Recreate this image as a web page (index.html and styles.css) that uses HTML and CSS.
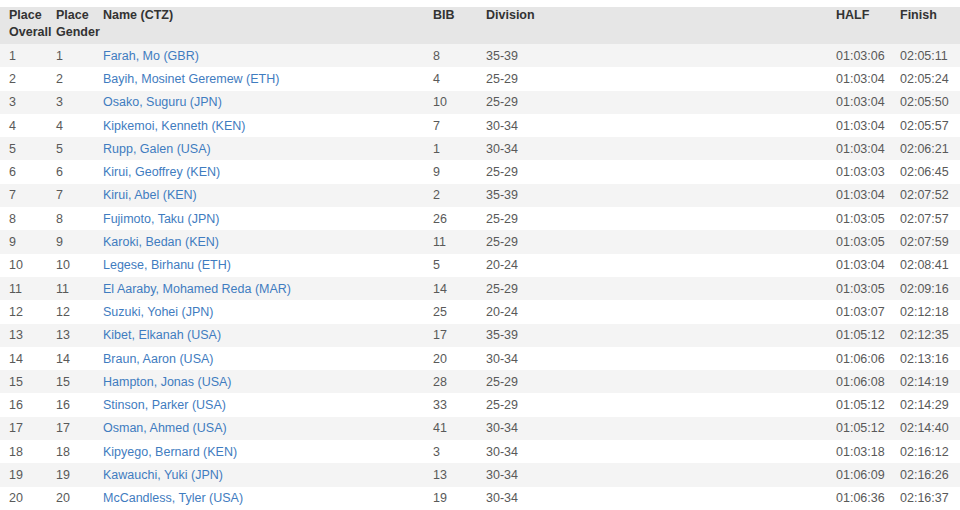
FILE: index.html
```html
<!DOCTYPE html>
<html>
<head>
<meta charset="utf-8">
<link rel="stylesheet" href="styles.css">
</head>
<body>
<table class="results">
  <colgroup>
    <col class="c-overall"><col class="c-gender"><col class="c-name"><col class="c-bib"><col class="c-div"><col class="c-half"><col class="c-finish">
  </colgroup>
  <thead>
    <tr><th>Place Overall</th><th>Place Gender</th><th>Name (CTZ)</th><th>BIB</th><th>Division</th><th>HALF</th><th>Finish</th></tr>
  </thead>
  <tbody>
    <tr><td>1</td><td>1</td><td><a href="#">Farah, Mo (GBR)</a></td><td>8</td><td>35-39</td><td>01:03:06</td><td>02:05:11</td></tr>
    <tr><td>2</td><td>2</td><td><a href="#">Bayih, Mosinet Geremew (ETH)</a></td><td>4</td><td>25-29</td><td>01:03:04</td><td>02:05:24</td></tr>
    <tr><td>3</td><td>3</td><td><a href="#">Osako, Suguru (JPN)</a></td><td>10</td><td>25-29</td><td>01:03:04</td><td>02:05:50</td></tr>
    <tr><td>4</td><td>4</td><td><a href="#">Kipkemoi, Kenneth (KEN)</a></td><td>7</td><td>30-34</td><td>01:03:04</td><td>02:05:57</td></tr>
    <tr><td>5</td><td>5</td><td><a href="#">Rupp, Galen (USA)</a></td><td>1</td><td>30-34</td><td>01:03:04</td><td>02:06:21</td></tr>
    <tr><td>6</td><td>6</td><td><a href="#">Kirui, Geoffrey (KEN)</a></td><td>9</td><td>25-29</td><td>01:03:03</td><td>02:06:45</td></tr>
    <tr><td>7</td><td>7</td><td><a href="#">Kirui, Abel (KEN)</a></td><td>2</td><td>35-39</td><td>01:03:04</td><td>02:07:52</td></tr>
    <tr><td>8</td><td>8</td><td><a href="#">Fujimoto, Taku (JPN)</a></td><td>26</td><td>25-29</td><td>01:03:05</td><td>02:07:57</td></tr>
    <tr><td>9</td><td>9</td><td><a href="#">Karoki, Bedan (KEN)</a></td><td>11</td><td>25-29</td><td>01:03:05</td><td>02:07:59</td></tr>
    <tr><td>10</td><td>10</td><td><a href="#">Legese, Birhanu (ETH)</a></td><td>5</td><td>20-24</td><td>01:03:04</td><td>02:08:41</td></tr>
    <tr><td>11</td><td>11</td><td><a href="#">El Aaraby, Mohamed Reda (MAR)</a></td><td>14</td><td>25-29</td><td>01:03:05</td><td>02:09:16</td></tr>
    <tr><td>12</td><td>12</td><td><a href="#">Suzuki, Yohei (JPN)</a></td><td>25</td><td>20-24</td><td>01:03:07</td><td>02:12:18</td></tr>
    <tr><td>13</td><td>13</td><td><a href="#">Kibet, Elkanah (USA)</a></td><td>17</td><td>35-39</td><td>01:05:12</td><td>02:12:35</td></tr>
    <tr><td>14</td><td>14</td><td><a href="#">Braun, Aaron (USA)</a></td><td>20</td><td>30-34</td><td>01:06:06</td><td>02:13:16</td></tr>
    <tr><td>15</td><td>15</td><td><a href="#">Hampton, Jonas (USA)</a></td><td>28</td><td>25-29</td><td>01:06:08</td><td>02:14:19</td></tr>
    <tr><td>16</td><td>16</td><td><a href="#">Stinson, Parker (USA)</a></td><td>33</td><td>25-29</td><td>01:05:12</td><td>02:14:29</td></tr>
    <tr><td>17</td><td>17</td><td><a href="#">Osman, Ahmed (USA)</a></td><td>41</td><td>30-34</td><td>01:05:12</td><td>02:14:40</td></tr>
    <tr><td>18</td><td>18</td><td><a href="#">Kipyego, Bernard (KEN)</a></td><td>3</td><td>30-34</td><td>01:03:18</td><td>02:16:12</td></tr>
    <tr><td>19</td><td>19</td><td><a href="#">Kawauchi, Yuki (JPN)</a></td><td>13</td><td>30-34</td><td>01:06:09</td><td>02:16:26</td></tr>
    <tr><td>20</td><td>20</td><td><a href="#">McCandless, Tyler (USA)</a></td><td>19</td><td>30-34</td><td>01:06:36</td><td>02:16:37</td></tr>
  </tbody>
</table>
</body>
</html>
```
FILE: styles.css
```css
html, body {
  margin: 0;
  padding: 0;
  background: #ffffff;
}
body {
  padding-top: 7px;
  font-family: "Liberation Sans", Arial, sans-serif;
  font-size: 12.5px;
  color: #595959;
}
.results {
  width: 960px;
  border-collapse: collapse;
  table-layout: fixed;
}
.c-overall { width: 47px; }
.c-gender { width: 47px; }
.c-name { width: 330px; }
.c-bib { width: 53px; }
.c-div { width: 350px; }
.c-half { width: 64px; }
.c-finish { width: 69px; }
.results th {
  background: #e6e6e6;
  color: #333333;
  font-weight: bold;
  text-align: left;
  vertical-align: top;
  padding: 0 0 0 9px;
  height: 37px;
  box-sizing: border-box;
  line-height: 17px;
  overflow: visible;
}
.results td {
  padding: 0 0 0 9px;
  height: 23.3px;
  line-height: 16px;
  white-space: nowrap;
  vertical-align: middle;
}
.results tbody tr:nth-child(odd) td {
  background: #f4f4f4;
}
.results a {
  color: #3f7cc0;
  text-decoration: none;
}
```
